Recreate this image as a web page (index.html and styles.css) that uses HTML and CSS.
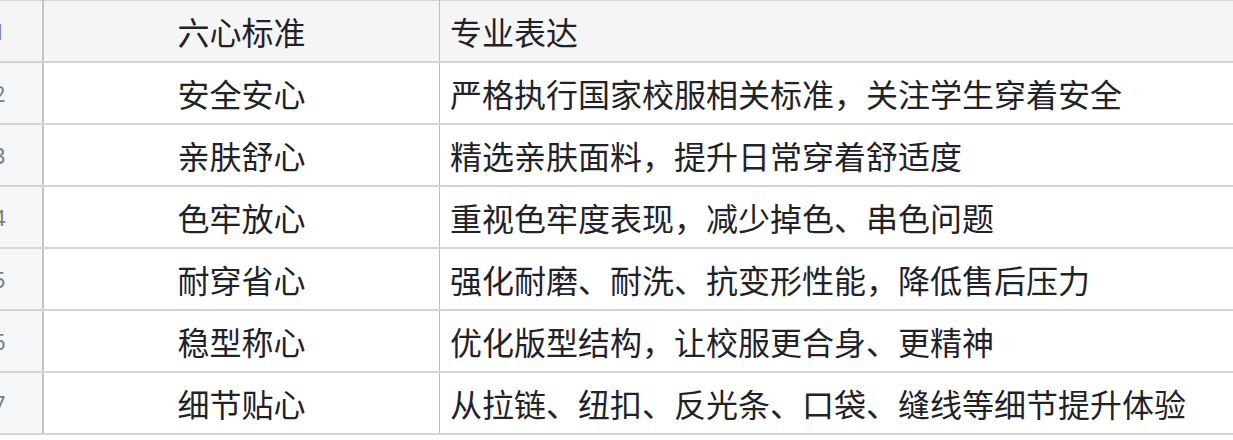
FILE: index.html
```html
<!DOCTYPE html>
<html lang="zh">
<head>
<meta charset="utf-8">
<title>六心标准</title>
<link rel="stylesheet" href="styles.css">
</head>
<body>
<table class="sheet">
  <tr class="head">
    <td class="num"><span>1</span></td>
    <td class="c1">六心标准</td>
    <td class="c2">专业表达</td>
  </tr>
  <tr>
    <td class="num"><span>2</span></td>
    <td class="c1">安全安心</td>
    <td class="c2">严格执行国家校服相关标准，关注学生穿着安全</td>
  </tr>
  <tr>
    <td class="num"><span>3</span></td>
    <td class="c1">亲肤舒心</td>
    <td class="c2">精选亲肤面料，提升日常穿着舒适度</td>
  </tr>
  <tr>
    <td class="num"><span>4</span></td>
    <td class="c1">色牢放心</td>
    <td class="c2">重视色牢度表现，减少掉色、串色问题</td>
  </tr>
  <tr>
    <td class="num"><span>5</span></td>
    <td class="c1">耐穿省心</td>
    <td class="c2">强化耐磨、耐洗、抗变形性能，降低售后压力</td>
  </tr>
  <tr>
    <td class="num"><span>6</span></td>
    <td class="c1">稳型称心</td>
    <td class="c2">优化版型结构，让校服更合身、更精神</td>
  </tr>
  <tr>
    <td class="num"><span>7</span></td>
    <td class="c1">细节贴心</td>
    <td class="c2">从拉链、纽扣、反光条、口袋、缝线等细节提升体验</td>
  </tr>
</table>
</body>
</html>
```

FILE: styles.css
```css
html, body {
  margin: 0;
  padding: 0;
  background: #ffffff;
  overflow: hidden;
}

.sheet {
  border-collapse: collapse;
  table-layout: fixed;
  width: 1233px;
  font-family: "Noto Sans CJK SC", "Noto Sans", sans-serif;
  font-size: 32px;
  color: #1f2329;
}

.sheet td {
  height: 60px;
  padding: 0;
  border-top: 2px solid #d4d4d4;
  border-bottom: 2px solid #d4d4d4;
  white-space: nowrap;
  overflow: hidden;
  line-height: 60px;
  vertical-align: middle;
}

.sheet tr:first-child td {
  border-top: 1px solid #d4d4d4;
}

.head td {
  background: #f5f5f5;
}

.num {
  width: 42px;
  background: #f5f6f7;
  border-right: 2px solid #c4c4c4;
  color: #7a7f87;
  font-family: "Noto Sans", "Liberation Sans", sans-serif;
  font-size: 22px;
  position: relative;
}

.num span {
  position: absolute;
  left: -7px;
  top: 0;
}

.c1 {
  width: 395px;
  text-align: center;
  border-right: 1px solid #bdbdbd;
}

.c2 {
  padding-left: 10px !important;
  text-align: left;
}
```
